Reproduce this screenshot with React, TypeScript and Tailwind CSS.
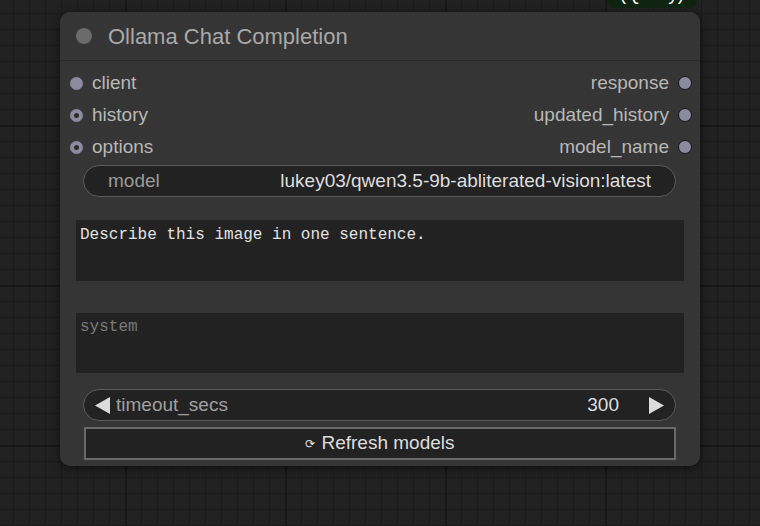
const inputs = [
  { name: "client", hollow: false },
  { name: "history", hollow: true },
  { name: "options", hollow: true },
];

const outputs = ["response", "updated_history", "model_name"];

function InputDot({ hollow }: { hollow: boolean }) {
  return (
    <span className="flex h-[13px] w-[13px] items-center justify-center rounded-full bg-[#8b8a9e]">
      {hollow && <span className="h-[5px] w-[5px] rounded-full bg-[#2c2c2c]" />}
    </span>
  );
}

function OutputDot() {
  return <span className="h-[14px] w-[14px] rounded-full border border-[#151515] bg-[#8b8a9e]" />;
}

function Arrow({ dir }: { dir: "left" | "right" }) {
  return (
    <svg width="16" height="17" viewBox="0 0 16 17" className="shrink-0">
      <polygon points={dir === "left" ? "16,0 16,17 1,8.5" : "0,0 0,17 15,8.5"} fill="#dcdcdc" />
    </svg>
  );
}

export default function App() {
  return (
    <div className="relative h-[526px] w-[760px] overflow-hidden bg-[#212121] bg-[linear-gradient(to_right,#171717_2px,transparent_2px),linear-gradient(to_bottom,#171717_2px,transparent_2px),linear-gradient(to_right,#1a1a1a_1px,transparent_1px),linear-gradient(to_bottom,#1a1a1a_1px,transparent_1px)] bg-[length:160px_160px,160px_160px,16px_16px,16px_16px] bg-[position:125px_125px,125px_125px,13px_13px,13px_13px] font-['Liberation_Sans',Arial,sans-serif]">
      {/* bottom edge of another node above */}
      <div className="absolute left-[607px] top-[-22px] flex h-[30px] w-[90px] items-end justify-center overflow-hidden rounded-b-[8px] bg-[#0e2410] text-[19px] leading-[19px] text-white">
        <span className="translate-y-[-5px]">(Query)</span>
      </div>

      <div className="pl-[60px] pt-[12px]">
        <div className="flex h-[454px] w-[640px] flex-col rounded-[10px] bg-[#353535] shadow-[0_2px_10px_rgba(0,0,0,0.55)]">
          {/* title */}
          <div className="flex h-[49px] items-center gap-[16px] border-b border-[#2a2a2a] pl-[16px]">
            <span className="h-[16px] w-[16px] rounded-full bg-[#6b6b6b]" />
            <span className="text-[22px] text-[#a9a9a9]">Ollama Chat Completion</span>
          </div>

          {/* slots */}
          <div className="mt-[6px] flex justify-between">
            <div className="flex flex-col">
              {inputs.map((s) => (
                <div key={s.name} className="flex h-[32px] items-center gap-[9px] pl-[10px] text-[19px] text-[#b8b8b8]">
                  <InputDot hollow={s.hollow} />
                  <span>{s.name}</span>
                </div>
              ))}
            </div>
            <div className="flex flex-col items-end">
              {outputs.map((name) => (
                <div key={name} className="flex h-[32px] items-center gap-[9px] pr-[8px] text-[19px] text-[#b8b8b8]">
                  <span>{name}</span>
                  <OutputDot />
                </div>
              ))}
            </div>
          </div>

          {/* model combo */}
          <div className="ml-[23px] mr-[24px] mt-[2px] flex h-[32px] items-center justify-between rounded-full border border-[#5c5c5c] bg-[#222222] px-[24px] text-[19px]">
            <span className="text-[#9a9a9a]">model</span>
            <span className="text-[#dedede]">lukey03/qwen3.5-9b-abliterated-vision:latest</span>
          </div>

          {/* prompt */}
          <div className="mx-[16px] mt-[23px] h-[61px] bg-[#222222] px-[4px] pt-[6px] font-['Courier_New','Liberation_Mono',monospace] text-[16px] leading-[18px] text-[#e2e2e2]">
            Describe this image in one sentence.
          </div>

          {/* system */}
          <div className="mx-[16px] mt-[32px] h-[60px] bg-[#222222] px-[4px] pt-[5px] font-['Courier_New','Liberation_Mono',monospace] text-[16px] leading-[18px] text-[#7a7a7a]">
            system
          </div>

          {/* number */}
          <div className="ml-[23px] mr-[24px] mt-[16px] flex h-[32px] items-center rounded-full border border-[#5c5c5c] bg-[#222222] pl-[10px] pr-[10px] text-[19px]">
            <Arrow dir="left" />
            <span className="ml-[6px] text-[#a0a0a0]">timeout_secs</span>
            <span className="ml-auto mr-[30px] text-[#dedede]">300</span>
            <Arrow dir="right" />
          </div>

          {/* button */}
          <div className="ml-[24px] mr-[24px] mt-[6px] flex h-[33px] items-center justify-center gap-[6px] border-2 border-[#6a6a6a] bg-[#222222] text-[19px] text-[#dedede]">
            <span className="text-[12px] leading-none">⟳</span>
            <span>Refresh models</span>
          </div>
        </div>
      </div>
    </div>
  );
}
